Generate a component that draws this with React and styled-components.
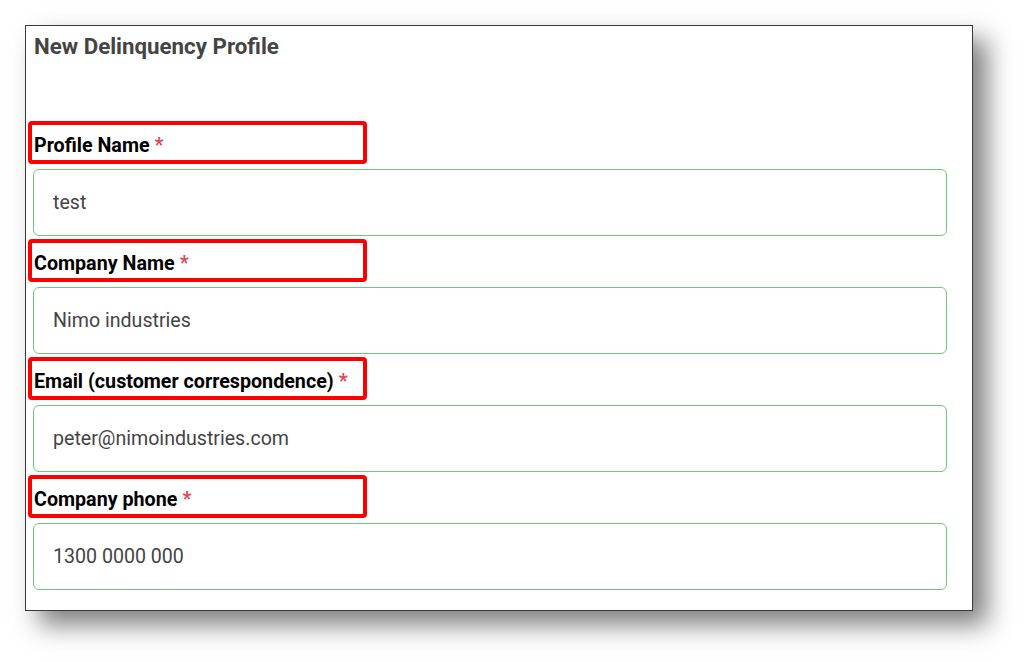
import styled, { createGlobalStyle } from "styled-components";

const GlobalStyle = createGlobalStyle`
  body {
    margin: 0;
    background: #fff;
    font-family: Roboto, "Liberation Sans", sans-serif;
  }
`;

const Page = styled.div`
  box-sizing: border-box;
  min-height: 662px;
  padding: 25px 0 0 25px;
`;

const Panel = styled.div`
  box-sizing: border-box;
  width: 948px;
  height: 586px;
  border: 1px solid #3a3a3a;
  background: #fff;
  box-shadow: 14px 14px 24px rgba(0, 0, 0, 0.5);
  padding: 7px 25px 0 7px;
  display: flex;
  flex-direction: column;
`;

const Title = styled.h2`
  margin: 0 0 62px 1px;
  font-size: 22.3px;
  line-height: 26px;
  font-weight: 700;
  color: #444;
`;

const Field = styled.div`
  display: flex;
  flex-direction: column;
  gap: 5px;
  margin-bottom: 3px;
`;

// red annotation box round each label
const LabelBox = styled.label`
  box-sizing: border-box;
  width: 339px;
  height: 43px;
  margin-left: -5px;
  border: 4px solid #ff0000;
  border-radius: 4px;
  display: flex;
  align-items: center;
  padding: 5px 0 0 2px;
  font-size: 19.7px;
  font-weight: 700;
  color: #000;
`;

const Required = styled.span`
  color: #e0475a;
  margin-left: 5px;
  font-weight: 700;
`;

const Input = styled.input`
  box-sizing: border-box;
  width: 914px;
  height: 67px;
  padding: 0 19px;
  border: 1px solid #6fc77c;
  border-radius: 6px;
  font-family: Roboto, "Liberation Sans", sans-serif;
  font-size: 19.6px;
  color: #444;
  background: #fff;
  outline: none;
`;

const fields = [
  { label: "Profile Name", value: "test" },
  { label: "Company Name", value: "Nimo industries" },
  { label: "Email (customer correspondence)", value: "peter@nimoindustries.com" },
  { label: "Company phone", value: "1300 0000 000" },
];

export default function App() {
  return (
    <>
      <GlobalStyle />
      <Page>
        <Panel>
          <Title>New Delinquency Profile</Title>
          {fields.map((f) => (
            <Field key={f.label}>
              <LabelBox>
                {f.label}
                <Required>*</Required>
              </LabelBox>
              <Input type="text" defaultValue={f.value} />
            </Field>
          ))}
        </Panel>
      </Page>
    </>
  );
}
